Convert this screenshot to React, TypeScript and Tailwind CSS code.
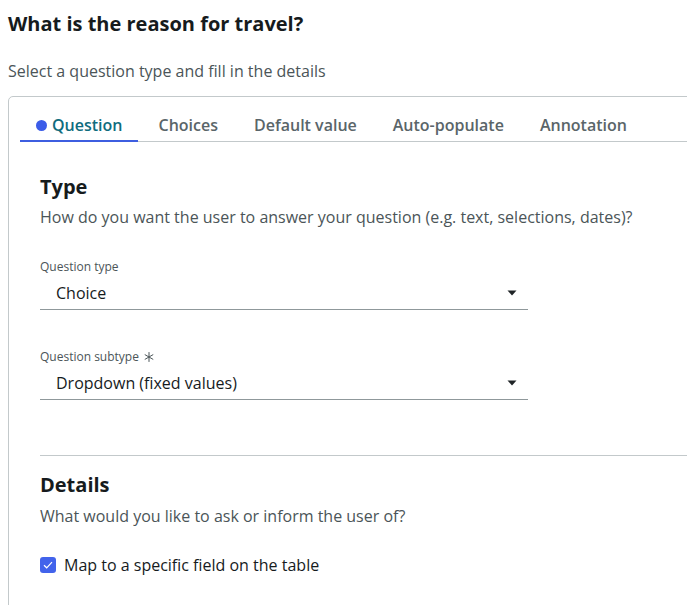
import React from "react";

function Caret() {
  return (
    <svg width="10" height="6" viewBox="0 0 10 6" className="shrink-0">
      <path d="M0.5 0.5 L9.5 0.5 L5 5.5 Z" fill="#1f2426" />
    </svg>
  );
}

function Asterisk() {
  return (
    <svg width="10" height="10" viewBox="0 0 10 10" className="ml-[5px] inline-block align-[-1px]">
      <g stroke="#4b5558" strokeWidth="1" strokeLinecap="round">
        <path d="M5 0.5 L5 9.5" />
        <path d="M1.1 2.75 L8.9 7.25" />
        <path d="M1.1 7.25 L8.9 2.75" />
      </g>
    </svg>
  );
}

function SelectField({ label, value, required }: { label: string; value: string; required?: boolean }) {
  return (
    <div className="w-[488px]">
      <div className="text-[12px] leading-4 text-[#4b5558]">
        {label}
        {required && <Asterisk />}
      </div>
      <div className="mt-[6px] flex items-center justify-between border-b border-[#8f989b] pb-1 pl-4 pr-[11px]">
        <span className="text-[16px] leading-6 text-[#161b1d]">{value}</span>
        <Caret />
      </div>
    </div>
  );
}

export default function App() {
  const tabs = ["Choices", "Default value", "Auto-populate", "Annotation"];
  return (
    <div
      className="w-[687px] h-[605px] overflow-hidden bg-white"
      style={{ fontFamily: '"Open Sans", "Noto Sans", sans-serif' }}
    >
      <div className="pl-2 pt-[10px]">
        <h1 className="text-[20px] leading-7 font-bold text-[#161b1d]">What is the reason for travel?</h1>
        <p className="mt-[21px] text-[16px] leading-6 text-[#4b5558]">Select a question type and fill in the details</p>
        <div className="mt-[13px] w-[760px] h-[600px] rounded-tl-[5px] border border-[#c3c9cb]">
          <div className="ml-[11px] flex gap-1 border-b border-[#c3c9cb]">
            <div className="-mb-px flex items-center gap-[5px] border-b-2 border-[#3e5ee0] px-4 pt-4 pb-[3px]">
              <span className="h-[11px] w-[11px] rounded-full bg-[#3b5ce8]" />
              <span className="text-[16px] leading-6 font-semibold text-[#0f6c7e]">Question</span>
            </div>
            {tabs.map((t) => (
              <div key={t} className="px-4 pt-4 pb-[4px]">
                <span className="text-[16px] leading-6 font-semibold text-[#5a6569]">{t}</span>
              </div>
            ))}
          </div>
          <div className="pl-[31px]">
            <h2 className="mt-[31px] text-[20px] leading-7 font-bold text-[#161b1d]">Type</h2>
            <p className="mt-1 text-[16px] leading-6 text-[#4b5558]">
              How do you want the user to answer your question (e.g. text, selections, dates)?
            </p>
            <div className="mt-[30px]">
              <SelectField label="Question type" value="Choice" />
            </div>
            <div className="mt-[39px]">
              <SelectField label="Question subtype" value="Dropdown (fixed values)" required />
            </div>
            <div className="mt-[55px] border-t border-[#c3c9cb]" />
            <h2 className="mt-[15px] text-[20px] leading-7 font-bold text-[#161b1d]">Details</h2>
            <p className="mt-[5px] text-[16px] leading-6 text-[#4b5558]">What would you like to ask or inform the user of?</p>
            <label className="mt-[25px] flex items-center gap-2">
              <span className="flex h-4 w-4 items-center justify-center rounded-[3px] bg-[#4263eb]">
                <svg width="10" height="8" viewBox="0 0 10 8">
                  <path d="M1 4.2 L3.7 6.8 L9 1.2" fill="none" stroke="white" strokeWidth="1.2" />
                </svg>
              </span>
              <span className="text-[16px] leading-6 text-[#161b1d]">Map to a specific field on the table</span>
            </label>
          </div>
        </div>
      </div>
    </div>
  );
}
